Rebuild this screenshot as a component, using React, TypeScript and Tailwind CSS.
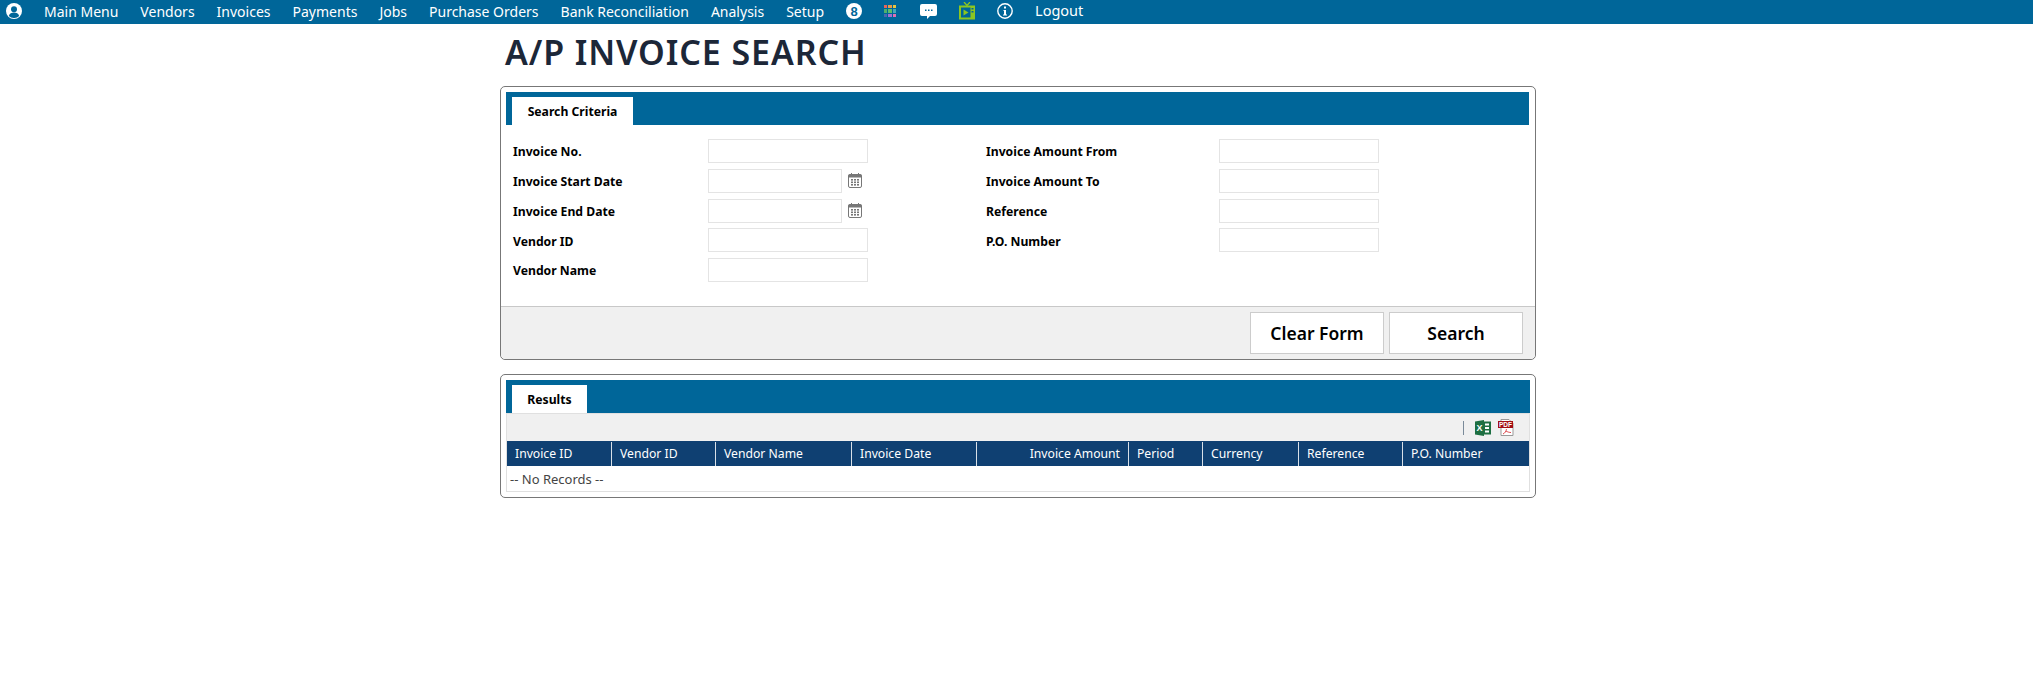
import React from "react";

const navLeft = ["Main Menu", "Vendors", "Invoices", "Payments", "Jobs", "Purchase Orders", "Bank Reconciliation", "Analysis", "Setup"];

const leftFields = [
  { label: "Invoice No." },
  { label: "Invoice Start Date", date: true },
  { label: "Invoice End Date", date: true },
  { label: "Vendor ID" },
  { label: "Vendor Name" },
];
const rightFields = ["Invoice Amount From", "Invoice Amount To", "Reference", "P.O. Number"];

const columns = [
  { name: "Invoice ID", w: "w-[105px]" },
  { name: "Vendor ID", w: "w-[104px]" },
  { name: "Vendor Name", w: "w-[136px]" },
  { name: "Invoice Date", w: "w-[125px]" },
  { name: "Invoice Amount", w: "w-[152px]", right: true },
  { name: "Period", w: "w-[74px]" },
  { name: "Currency", w: "w-[96px]" },
  { name: "Reference", w: "w-[104px]" },
  { name: "P.O. Number", w: "flex-1" },
];

function UserIcon() {
  return (
    <svg width="16" height="16" viewBox="0 0 16 16" className="shrink-0">
      <circle cx="8" cy="8" r="8" fill="#fff" />
      <circle cx="8" cy="6.2" r="3" fill="#006699" />
      <path d="M2.8 13c.8-2.5 2.8-3.4 5.2-3.4s4.4.9 5.2 3.4A7 7 0 0 1 8 15a7 7 0 0 1-5.2-2z" fill="#006699" />
    </svg>
  );
}

function BadgeIcon() {
  return (
    <span className="flex h-4 w-4 items-center justify-center rounded-full bg-white font-['Liberation_Sans',sans-serif] text-[13px] font-bold leading-none text-[#006699]">
      8
    </span>
  );
}

function GridIcon() {
  const colors = ["#e8645a", "#e89a4a", "#e8c53f", "#4fb06a", "#5ac06a", "#46a8b8", "#4a68b0", "#a070d0", "#e070b0"];
  return (
    <div className="grid h-[12px] w-[12px] grid-cols-3 gap-px">
      {colors.map((c) => (
        <span key={c} className="block" style={{ backgroundColor: c }} />
      ))}
    </div>
  );
}

function ChatIcon() {
  return (
    <svg width="17" height="15" viewBox="0 0 17 15" className="ml-[2px]">
      <path d="M2 0h13a2 2 0 0 1 2 2v8a2 2 0 0 1-2 2h-5l-3 3v-3H2a2 2 0 0 1-2-2V2a2 2 0 0 1 2-2z" fill="#fff" />
      <rect x="5" y="5.5" width="1.5" height="1.5" fill="#006699" />
      <rect x="8" y="5.5" width="1.5" height="1.5" fill="#006699" />
      <rect x="11" y="5.5" width="1.5" height="1.5" fill="#006699" />
    </svg>
  );
}

function TvIcon() {
  return (
    <svg width="16" height="18" viewBox="0 0 16 18">
      <path d="M5 0l3 3.500L11 0" stroke="#8cc620" strokeWidth="1.3" fill="none" />
      <rect x="0" y="3.5" width="16" height="14" fill="#8cc620" />
      <rect x="2" y="5.5" width="9.5" height="10" fill="#006699" />
      <path d="M4.500 7.500l5 3-5 3z" fill="#8cc620" />
      <rect x="12.5" y="6" width="2" height="1.5" fill="#006699" />
      <rect x="12.5" y="9" width="2" height="1.5" fill="#006699" />
    </svg>
  );
}

function InfoIcon() {
  return (
    <svg width="16" height="16" viewBox="0 0 16 16">
      <circle cx="8" cy="8" r="7.2" fill="none" stroke="#fff" strokeWidth="1.4" />
      <rect x="7" y="3.5" width="2" height="2" fill="#fff" />
      <path d="M6.500 7H9v4.500h1v1H6v-1h1V8h-.5z" fill="#fff" />
    </svg>
  );
}

function CalendarIcon() {
  return (
    <svg width="14" height="15" viewBox="0 0 14 15" className="ml-[6px] shrink-0">
      <rect x="0.5" y="1.5" width="13" height="13" rx="1.5" fill="#fff" stroke="#777" />
      <rect x="0.5" y="1.5" width="13" height="3" fill="#777" />
      <rect x="3" y="0" width="1" height="2.5" fill="#777" />
      <rect x="10" y="0" width="1" height="2.5" fill="#777" />
      {[3, 6, 9].map((x) =>
        [6, 8.5, 11].map((y) => <rect key={`${x}-${y}`} x={x} y={y} width="2" height="1.6" fill="#777" />)
      )}
    </svg>
  );
}

function ExcelIcon() {
  return (
    <svg width="16" height="16" viewBox="0 0 16 16">
      <rect x="7" y="1.5" width="9" height="13" fill="#1d6f42" />
      <rect x="10" y="3.5" width="4" height="2" fill="#fff" />
      <rect x="10" y="7" width="4" height="2" fill="#fff" />
      <rect x="10" y="10.5" width="4" height="2" fill="#fff" />
      <path d="M0 1.500L9 0v16L0 14.500z" fill="#1d6f42" />
      <text x="4.5" y="11" textAnchor="middle" fontSize="9" fontWeight="700" fill="#fff" fontFamily="Liberation Sans, sans-serif">
        X
      </text>
    </svg>
  );
}

function PdfIcon() {
  return (
    <svg width="16" height="17" viewBox="0 0 16 17">
      <path d="M3 0.500h8l4 4v12H3z" fill="#fff" stroke="#999" />
      <rect x="0" y="2" width="15" height="7" fill="#a30d14" />
      <text x="7.5" y="7.8" textAnchor="middle" fontSize="6.5" fontWeight="700" fill="#fff" fontFamily="Liberation Sans, sans-serif">
        PDF
      </text>
      <path d="M5 15c2-1 3-2.500 3.500-5M8 12c1.500 1 3.500 1.500 5 1.500" stroke="#d8343a" strokeWidth="0.9" fill="none" />
    </svg>
  );
}

function TextBox({ className = "w-[160px]" }: { className?: string }) {
  return <input type="text" className={`h-[24px] border border-[#e4e4e4] bg-white outline-none ${className}`} />;
}

function TabBand({ title, tabWidth }: { title: string; tabWidth: string }) {
  return (
    <div className="flex h-[33px] items-end bg-[#006699] pl-[6px]">
      <div className={`flex h-[28px] items-center justify-center bg-white pt-[3px] text-[12.2px] font-bold text-black ${tabWidth}`}>
        {title}
      </div>
    </div>
  );
}

export default function App() {
  return (
    <div className="min-h-[675px] bg-white font-['Noto_Sans','Open_Sans',sans-serif]">
      <nav className="flex h-[24px] items-center gap-[22px] bg-[#006699] pb-[2px] pl-[6px] text-[14px] text-white">
        <UserIcon />
        {navLeft.map((item) => (
          <span key={item} className="whitespace-nowrap">
            {item}
          </span>
        ))}
        <BadgeIcon />
        <GridIcon />
        <ChatIcon />
        <TvIcon />
        <InfoIcon />
        <span className="text-[14.5px]">Logout</span>
      </nav>

      <div className="ml-[500px] w-[1036px]">
        <h1 className="flex h-[62px] items-center pb-[7px] pl-[5px] text-[34px] font-semibold leading-none tracking-[0.9px] text-[#1c2738]">
          A/P INVOICE SEARCH
        </h1>

        <section className="rounded-[5px] border border-[#777]">
          <div className="pl-[5px] pr-[6px] pt-[5px]">
            <TabBand title="Search Criteria" tabWidth="w-[121px]" />
          </div>
          <div className="flex h-[181px] pt-[14px]">
            <div className="w-[485px] pl-[12px]">
              {leftFields.map((f) => (
                <div key={f.label} className="flex h-[29.75px] items-start">
                  <label className="w-[195px] pt-[4.4px] text-[12.2px] font-bold leading-[18px] text-black">{f.label}</label>
                  {f.date ? (
                    <>
                      <TextBox className="w-[134px]" />
                      <div className="flex h-[24px] items-center">
                        <CalendarIcon />
                      </div>
                    </>
                  ) : (
                    <TextBox />
                  )}
                </div>
              ))}
            </div>
            <div>
              {rightFields.map((label) => (
                <div key={label} className="flex h-[29.75px] items-start">
                  <label className="w-[233px] pt-[4.4px] text-[12.2px] font-bold leading-[18px] text-black">{label}</label>
                  <TextBox />
                </div>
              ))}
            </div>
          </div>
          <div className="flex h-[53px] items-start justify-end gap-[5px] rounded-b-[5px] border-t border-[#c8c8c8] bg-[#f0f0f0] pr-[12px] pt-[5px]">
            <button className="h-[42px] w-[134px] border border-[#ccc] bg-white text-[17.5px] font-semibold text-black">Clear Form</button>
            <button className="h-[42px] w-[134px] border border-[#ccc] bg-white text-[17.5px] font-semibold text-black">Search</button>
          </div>
        </section>

        <section className="mt-[14px] rounded-[5px] border border-[#777] px-[5px] pb-[5px] pt-[5px]">
          <TabBand title="Results" tabWidth="w-[75px]" />
          <div className="flex h-[28px] items-center justify-end border-x border-t border-[#e0e0e0] bg-[#f0f0f0] pr-[15px]">
            <span className="mr-[11px] h-[14px] w-px bg-[#7a8a99]" />
            <ExcelIcon />
            <span className="w-[7px]" />
            <PdfIcon />
          </div>
          <div className="border-x border-b border-[#e0e0e0]">
            <div className="flex h-[25px] bg-[#0f4072] pt-px text-[12.2px] text-white">
              {columns.map((c) => (
                <div
                  key={c.name}
                  className={`flex items-center border-r border-[#d8e0e8] px-[8px] last:border-r-0 ${c.w} ${c.right ? "justify-end" : ""}`}
                >
                  {c.name}
                </div>
              ))}
            </div>
            <div className="flex h-[25px] items-center pl-[3px] pt-[3px] text-[13px] text-[#444]">-- No Records --</div>
          </div>
        </section>
      </div>
    </div>
  );
}
